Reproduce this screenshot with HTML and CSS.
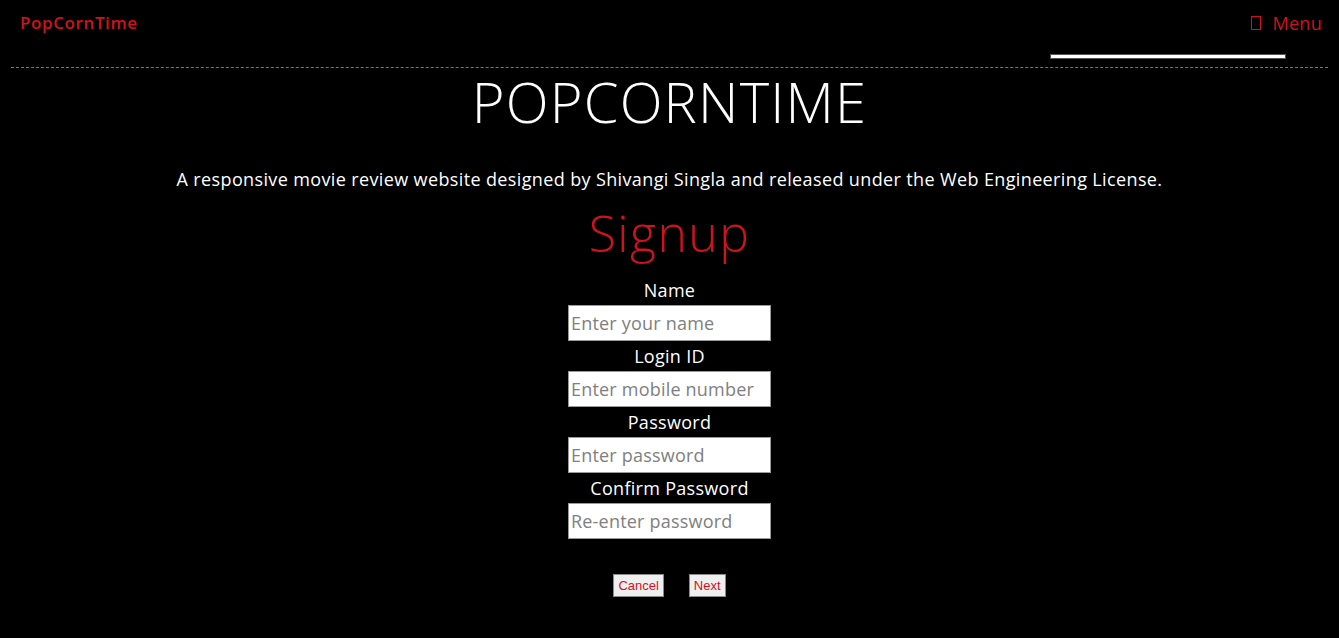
FILE: index.html
```html
<!DOCTYPE html>
<html>
<head>
<meta charset="utf-8">
<title>PopCornTime</title>
<link rel="stylesheet" href="styles.css">
</head>
<body>
<header class="nav">
  <a class="brand" href="#">PopCornTime</a>
  <div class="nav-right">
    <a class="menu" href="#"><span class="menu-icon"></span>Menu</a>
    <div class="menu-bar"></div>
  </div>
</header>
<hr class="rule">
<main class="content">
  <h1 class="title">POPCORNTIME</h1>
  <p class="desc">A responsive movie review website designed by Shivangi Singla and released under the Web Engineering License.</p>
  <h2 class="signup">Signup</h2>
  <form class="form">
    <label class="label">Name</label>
    <input class="field" type="text" placeholder="Enter your name">
    <label class="label">Login ID</label>
    <input class="field" type="text" placeholder="Enter mobile number">
    <label class="label">Password</label>
    <input class="field" type="password" placeholder="Enter password">
    <label class="label">Confirm Password</label>
    <input class="field" type="password" placeholder="Re-enter password">
    <div class="buttons">
      <button class="btn" type="button">Cancel</button>
      <button class="btn" type="button">Next</button>
    </div>
  </form>
</main>
</body>
</html>
```
FILE: styles.css
```css
html, body {
  background: #000;
}
body {
  margin: 0;
  font-family: "Open Sans", "Liberation Sans", sans-serif;
  color: #fff;
}
.nav {
  display: flex;
  justify-content: space-between;
  align-items: flex-start;
  height: 59px;
  padding: 0 17px 0 20px;
}
.brand {
  color: #d0121e;
  text-decoration: none;
  font-size: 17px;
  font-weight: 600;
  margin-top: 11px;
  letter-spacing: 0.6px;
}
.nav-right {
  display: flex;
  flex-direction: column;
  align-items: flex-end;
}
.menu {
  color: #d0121e;
  text-decoration: none;
  font-size: 18px;
  margin-top: 11px;
  display: flex;
  align-items: center;
  letter-spacing: 0.3px;
}
.menu-icon {
  display: inline-block;
  width: 8px;
  height: 12px;
  border: 1px solid #d0121e;
  margin-right: 11px;
}
.menu-bar {
  width: 234px;
  height: 3px;
  background: #fff;
  border: 1px solid #555;
  margin-top: 19px;
  margin-right: 36px;
}
.rule {
  margin: 8px 11px 0 11px;
  border: 0;
  border-top: 1px dashed #777;
  height: 0;
}
.content {
  display: flex;
  flex-direction: column;
  align-items: center;
}
.title {
  margin: 1px 0 0;
  font-size: 56px;
  font-weight: 300;
  line-height: 64px;
  letter-spacing: 1.2px;
}
.desc {
  margin: 34px 0 0;
  font-size: 18px;
  line-height: 24px;
  letter-spacing: 0.37px;
}
.signup {
  margin: 11px 0 0;
  color: #d0121e;
  font-size: 50px;
  font-weight: 300;
  line-height: 62px;
  letter-spacing: 1.4px;
}
.form {
  display: flex;
  flex-direction: column;
  align-items: center;
  margin-top: 11px;
}
.label {
  font-size: 18px;
  line-height: 30px;
  height: 30px;
  letter-spacing: 0.3px;
}
.field {
  box-sizing: border-box;
  width: 203px;
  height: 36px;
  border: 1px solid #999;
  padding: 0 2px;
  font-family: "Open Sans", "Liberation Sans", sans-serif;
  font-size: 18px;
  letter-spacing: 0.2px;
  color: #333;
  background: #fff;
}
.field::placeholder {
  color: #808080;
}
.buttons {
  display: flex;
  gap: 25px;
  margin-top: 35px;
}
.btn {
  font-family: "Liberation Sans", Arial, sans-serif;
  font-size: 13px;
  color: #d0121e;
  background: #efefef;
  border: 1px solid #8a8a8a;
  padding: 3px 4px;
  height: 23px;
}
```
